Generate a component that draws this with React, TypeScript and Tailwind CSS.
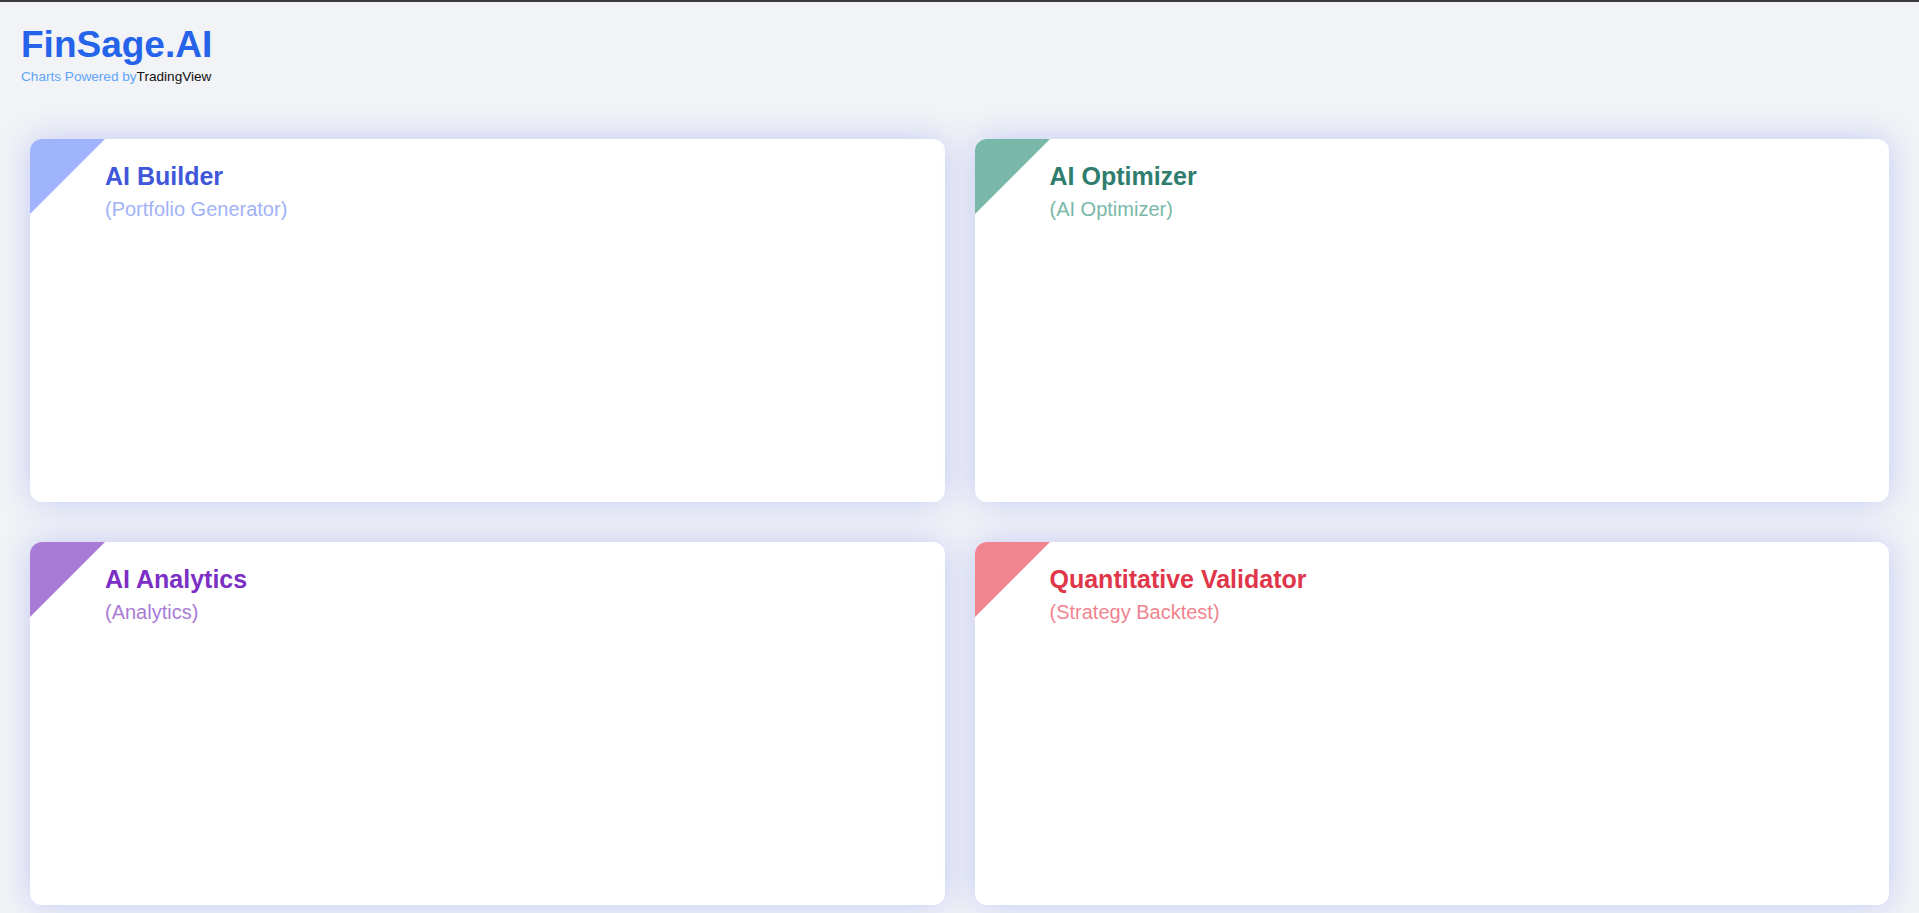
import React from "react";

type Card = {
  title: string;
  sub: string;
  tri: string;
  titleCls: string;
  subCls: string;
};

const cards: Card[] = [
  { title: "AI Builder", sub: "(Portfolio Generator)", tri: "border-t-[#a0b3fd]", titleCls: "text-[#3f57d9]", subCls: "text-[#a2b2f7]" },
  { title: "AI Optimizer", sub: "(AI Optimizer)", tri: "border-t-[#79b8a9]", titleCls: "text-[#2f7d6e]", subCls: "text-[#79b8a9]" },
  { title: "AI Analytics", sub: "(Analytics)", tri: "border-t-[#a87cd6]", titleCls: "text-[#7b2fc4]", subCls: "text-[#a87cd6]" },
  { title: "Quantitative Validator", sub: "(Strategy Backtest)", tri: "border-t-[#f0848f]", titleCls: "text-[#e0364a]", subCls: "text-[#f0848f]" },
];

export default function App() {
  return (
    <div
      className="min-h-screen bg-[#f2f3f6] border-t-2 border-[#3a3a3a] pb-[9px]"
      style={{ fontFamily: '"Liberation Sans", Arial, sans-serif' }}
    >
      <header className="pl-[21px] pt-[21px]">
        <h1 className="text-[37px] leading-[44px] font-bold text-[#2563eb]">FinSage.AI</h1>
        <div className="mt-[2px] text-[13.6px] leading-[16px]">
          <span className="text-[#60a5fa]">Charts Powered by</span>
          <span className="text-[#111111]">TradingView</span>
        </div>
      </header>
      <main className="grid grid-cols-2 gap-x-[30px] gap-y-[40px] px-[30px] pt-[54px]">
        {cards.map((c) => (
          <div
            key={c.title}
            className="relative h-[363px] bg-white rounded-[12px] overflow-hidden shadow-[0_0_32px_rgba(88,110,242,0.3)]"
          >
            <div className={`absolute left-0 top-0 w-0 h-0 border-t-[75px] border-r-[75px] border-r-transparent ${c.tri}`} />
            <div className="pl-[75px] pt-[22px]">
              <div className={`text-[25px] leading-[30px] font-bold ${c.titleCls}`}>{c.title}</div>
              <div className={`mt-[6px] text-[20px] leading-[24px] ${c.subCls}`}>{c.sub}</div>
            </div>
          </div>
        ))}
      </main>
    </div>
  );
}
